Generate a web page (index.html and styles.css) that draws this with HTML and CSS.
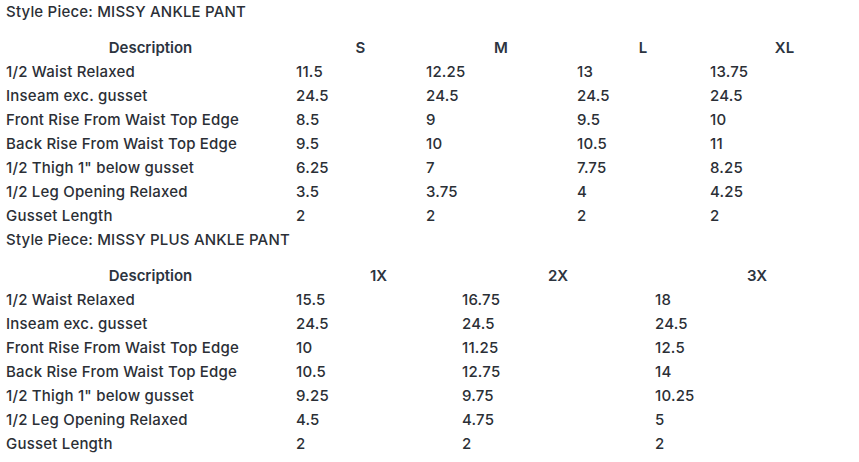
FILE: index.html
```html
<!DOCTYPE html>
<html lang="en">
<head>
<meta charset="utf-8">
<title>Style Pieces</title>
<link rel="stylesheet" href="styles.css">
</head>
<body>
<div class="sheet">
  <div class="style-title">Style Piece: MISSY ANKLE PANT</div>
  <table class="spec">
    <colgroup>
      <col class="c-desc"><col class="c-s"><col class="c-m"><col class="c-l"><col>
    </colgroup>
    <thead>
      <tr><th>Description</th><th>S</th><th>M</th><th>L</th><th>XL</th></tr>
    </thead>
    <tbody>
      <tr><td>1/2 Waist Relaxed</td><td>11.5</td><td>12.25</td><td>13</td><td>13.75</td></tr>
      <tr><td>Inseam exc. gusset</td><td>24.5</td><td>24.5</td><td>24.5</td><td>24.5</td></tr>
      <tr><td>Front Rise From Waist Top Edge</td><td>8.5</td><td>9</td><td>9.5</td><td>10</td></tr>
      <tr><td>Back Rise From Waist Top Edge</td><td>9.5</td><td>10</td><td>10.5</td><td>11</td></tr>
      <tr><td>1/2 Thigh 1" below gusset</td><td>6.25</td><td>7</td><td>7.75</td><td>8.25</td></tr>
      <tr><td>1/2 Leg Opening Relaxed</td><td>3.5</td><td>3.75</td><td>4</td><td>4.25</td></tr>
      <tr><td>Gusset Length</td><td>2</td><td>2</td><td>2</td><td>2</td></tr>
    </tbody>
  </table>
  <div class="style-title">Style Piece: MISSY PLUS ANKLE PANT</div>
  <table class="spec">
    <colgroup>
      <col class="c-desc"><col class="c-1x"><col class="c-2x"><col>
    </colgroup>
    <thead>
      <tr><th>Description</th><th>1X</th><th>2X</th><th>3X</th></tr>
    </thead>
    <tbody>
      <tr><td>1/2 Waist Relaxed</td><td>15.5</td><td>16.75</td><td>18</td></tr>
      <tr><td>Inseam exc. gusset</td><td>24.5</td><td>24.5</td><td>24.5</td></tr>
      <tr><td>Front Rise From Waist Top Edge</td><td>10</td><td>11.25</td><td>12.5</td></tr>
      <tr><td>Back Rise From Waist Top Edge</td><td>10.5</td><td>12.75</td><td>14</td></tr>
      <tr><td>1/2 Thigh 1" below gusset</td><td>9.25</td><td>9.75</td><td>10.25</td></tr>
      <tr><td>1/2 Leg Opening Relaxed</td><td>4.5</td><td>4.75</td><td>5</td></tr>
      <tr><td>Gusset Length</td><td>2</td><td>2</td><td>2</td></tr>
    </tbody>
  </table>
</div>
</body>
</html>
```
FILE: styles.css
```css
html, body {
  margin: 0;
  padding: 0;
  background: #ffffff;
}
.sheet {
  padding: 0 0 0 5px;
  font-family: Inter, "Open Sans", sans-serif;
  font-size: 15px;
  font-weight: 500;
  letter-spacing: 0.2px;
  color: #2b2f36;
}
.style-title {
  height: 24px;
  line-height: 24px;
  padding-left: 1px;
}
.spec {
  width: 854px;
  table-layout: fixed;
  border-collapse: collapse;
  margin: 12px 0 0 0;
}
.c-desc { width: 290px; }
.c-s { width: 130px; }
.c-m { width: 151px; }
.c-l { width: 133px; }
.c-1x { width: 166px; }
.c-2x { width: 193px; }
.spec th,
.spec td {
  padding: 0 0 0 1px;
  height: 24px;
  line-height: 24px;
  white-space: nowrap;
}
.spec th {
  font-weight: 600;
  letter-spacing: 0;
  text-align: center;
  color: #2c3440;
}
.spec td {
  text-align: left;
}
```
